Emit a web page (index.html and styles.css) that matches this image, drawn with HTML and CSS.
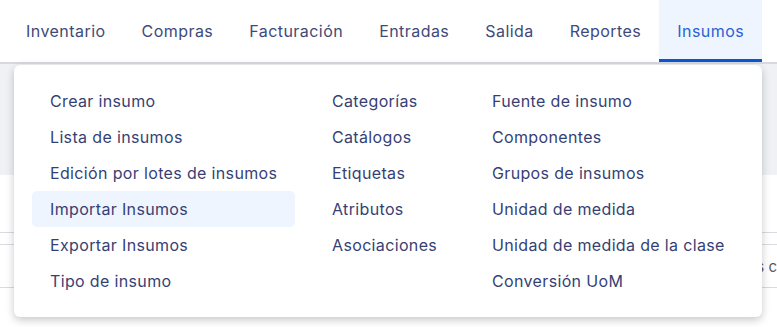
FILE: index.html
```html
<!DOCTYPE html>
<html lang="es">
<head>
    <meta charset="UTF-8">
    <meta name="viewport" content="width=device-width, initial-scale=1.0">
    <title>Insumos</title>
    <link rel="stylesheet" href="styles.css">
</head>
<body>
    <nav class="topnav">
        <a class="nav-item">Inventario</a>
        <a class="nav-item">Compras</a>
        <a class="nav-item">Facturación</a>
        <a class="nav-item">Entradas</a>
        <a class="nav-item">Salida</a>
        <a class="nav-item">Reportes</a>
        <a class="nav-item active">Insumos</a>
    </nav>

    <div class="page">
        <div class="page-band"></div>
        <div class="page-table">
            <div class="row row-a"></div>
            <div class="row row-b"></div>
            <div class="row row-c"><span class="cell-end">s c</span></div>
        </div>

        <div class="dropdown">
            <div class="menu-col col-1">
                <a class="menu-item">Crear insumo</a>
                <a class="menu-item">Lista de insumos</a>
                <a class="menu-item">Edición por lotes de insumos</a>
                <a class="menu-item hover">Importar Insumos</a>
                <a class="menu-item">Exportar Insumos</a>
                <a class="menu-item">Tipo de insumo</a>
            </div>
            <div class="menu-col col-2">
                <a class="menu-item">Categorías</a>
                <a class="menu-item">Catálogos</a>
                <a class="menu-item">Etiquetas</a>
                <a class="menu-item">Atributos</a>
                <a class="menu-item">Asociaciones</a>
            </div>
            <div class="menu-col col-3">
                <a class="menu-item">Fuente de insumo</a>
                <a class="menu-item">Componentes</a>
                <a class="menu-item">Grupos de insumos</a>
                <a class="menu-item">Unidad de medida</a>
                <a class="menu-item">Unidad de medida de la clase</a>
                <a class="menu-item">Conversión UoM</a>
            </div>
        </div>
    </div>
</body>
</html>
```

FILE: styles.css
```css
body, html {
    margin: 0;
    padding: 0;
    width: 100%;
    height: 100%;
    overflow: hidden;
    background: #ffffff;
    font-family: Inter, "Noto Sans", sans-serif;
}
.topnav {
    display: flex;
    height: 62px;
    padding-left: 8px;
    border-bottom: 2px solid #d7d9de;
    background: #ffffff;
}
.nav-item {
    display: flex;
    align-items: center;
    padding: 0 18px;
    font-size: 16px;
    letter-spacing: 0.45px;
    color: #404a7a;
    box-sizing: border-box;
}
.nav-item.active {
    background: #eef5ff;
    color: #2a60d6;
    border-bottom: 3px solid #0b57d0;
    padding-top: 3px;
}
.page {
    position: relative;
    height: 263px;
}
.page-band {
    height: 111px;
    background: #f0f1f5;
}
.page-table {
    padding-top: 29px;
}
.row {
    border-bottom: 1px solid #d9dbe0;
}
.row-a {
    height: 28px;
}
.row-b {
    height: 11px;
}
.row-c {
    height: 42px;
    display: flex;
    align-items: center;
    justify-content: flex-end;
    overflow: hidden;
}
.cell-end {
    font-size: 15px;
    color: #555b66;
    white-space: nowrap;
}
.dropdown {
    position: absolute;
    top: 1px;
    left: 14px;
    width: 748px;
    box-sizing: border-box;
    padding: 18px;
    display: grid;
    grid-template-columns: 263px 141px auto;
    column-gap: 19px;
    background: #ffffff;
    border-radius: 6px;
    box-shadow: 0 3px 8px rgba(0, 0, 0, 0.22);
}
.menu-col {
    display: flex;
    flex-direction: column;
}
.menu-item {
    display: flex;
    align-items: center;
    height: 36px;
    padding: 0 18px;
    font-size: 16px;
    letter-spacing: 0.35px;
    color: #363f74;
    border-radius: 5px;
    white-space: nowrap;
}
.menu-item.hover {
    background: #eef5ff;
}
```
